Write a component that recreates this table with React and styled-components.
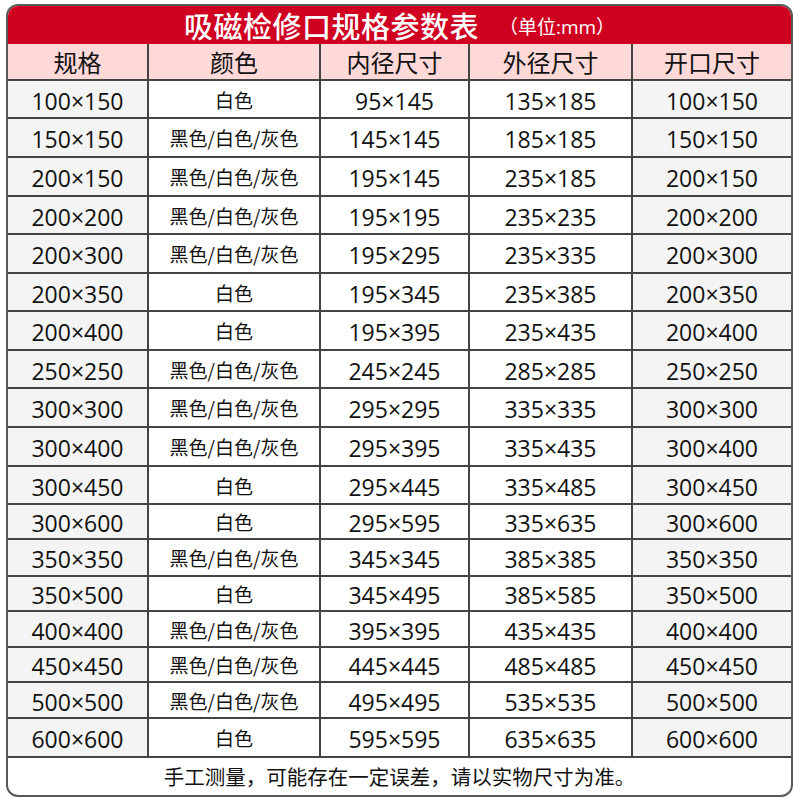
import React from 'react';
import styled, { createGlobalStyle } from 'styled-components';

const GlobalStyle = createGlobalStyle`
  html, body {
    margin: 0;
    padding: 0;
    background: #fff;
  }
  body {
    font-family: "Noto Sans CJK SC", "Noto Sans", sans-serif;
    color: #111;
  }
`;

const Frame = styled.div`
  margin: 4px 7px 3px 6px;
  border: 2px solid #5a5a5a;
  border-radius: 12px;
  overflow: hidden;
  background: #fff;
`;

const TitleBar = styled.div`
  height: 38px;
  background: #cf0020;
  color: #fff;
  display: flex;
  align-items: center;
  justify-content: center;
  gap: 20px;
`;

const Title = styled.h1`
  margin: 0;
  font-size: 29px;
  font-weight: 500;
  letter-spacing: 0.5px;
  line-height: 1;
`;

const Unit = styled.span`
  font-family: "Open Sans", "Noto Sans CJK SC", sans-serif;
  font-size: 19px;
  line-height: 1;
  margin-top: 4px;
`;

const Row = styled.div`
  display: grid;
  grid-template-columns: 141px 172px 149px 163px 1fr;
  height: ${(p) => p.$h}px;
  background: ${(p) => (p.$head ? '#ffd8d8' : 'transparent')};
`;

const Cell = styled.div`
  display: flex;
  align-items: center;
  justify-content: center;
  border-bottom: 2px solid #444;
  border-right: 2px solid #444;
  box-sizing: border-box;
  padding-top: ${(p) => (p.$num ? '4px' : '0')};
  font-family: ${(p) =>
    p.$num ? '"Open Sans", "Noto Sans CJK SC", sans-serif' : '"Noto Sans CJK SC", sans-serif'};
  font-size: ${(p) => (p.$small ? '19px' : p.$num ? '23px' : '24px')};
  line-height: 1;
  white-space: nowrap;
  background: ${(p) => (p.$shade ? '#f4f4f4' : 'transparent')};
  &:last-child {
    border-right: none;
  }
`;

const Footer = styled.div`
  height: 37px;
  display: flex;
  align-items: center;
  justify-content: center;
  font-size: 20.5px;
  line-height: 1;
`;

const heads = ['规格', '颜色', '内径尺寸', '外径尺寸', '开口尺寸'];

const ALL = '黑色/白色/灰色';
const WHITE = '白色';

const rows = [
  ['100×150', WHITE, '95×145', '135×185', '100×150', 38],
  ['150×150', ALL, '145×145', '185×185', '150×150', 39],
  ['200×150', ALL, '195×145', '235×185', '200×150', 39],
  ['200×200', ALL, '195×195', '235×235', '200×200', 38],
  ['200×300', ALL, '195×295', '235×335', '200×300', 39],
  ['200×350', WHITE, '195×345', '235×385', '200×350', 38],
  ['200×400', WHITE, '195×395', '235×435', '200×400', 39],
  ['250×250', ALL, '245×245', '285×285', '250×250', 38],
  ['300×300', ALL, '295×295', '335×335', '300×300', 39],
  ['300×400', ALL, '295×395', '335×435', '300×400', 39],
  ['300×450', WHITE, '295×445', '335×485', '300×450', 38],
  ['300×600', WHITE, '295×595', '335×635', '300×600', 35],
  ['350×350', ALL, '345×345', '385×385', '350×350', 37],
  ['350×500', WHITE, '345×495', '385×585', '350×500', 35],
  ['400×400', ALL, '395×395', '435×435', '400×400', 36],
  ['450×450', ALL, '445×445', '485×485', '450×450', 35],
  ['500×500', ALL, '495×495', '535×535', '500×500', 36],
  ['600×600', WHITE, '595×595', '635×635', '600×600', 39],
];

export default function App() {
  return (
    <>
      <GlobalStyle />
      <Frame>
        <TitleBar>
          <Title>吸磁检修口规格参数表</Title>
          <Unit>（单位:mm）</Unit>
        </TitleBar>
        <Row $head $h={37}>
          {heads.map((h) => (
            <Cell key={h}>{h}</Cell>
          ))}
        </Row>
        {rows.map(([size, color, inner, outer, open, h]) => (
          <Row key={size} $h={h}>
            <Cell $num $shade>{size}</Cell>
            <Cell $small>{color}</Cell>
            <Cell $num>{inner}</Cell>
            <Cell $num>{outer}</Cell>
            <Cell $num $shade>{open}</Cell>
          </Row>
        ))}
        <Footer>手工测量，可能存在一定误差，请以实物尺寸为准。</Footer>
      </Frame>
    </>
  );
}
